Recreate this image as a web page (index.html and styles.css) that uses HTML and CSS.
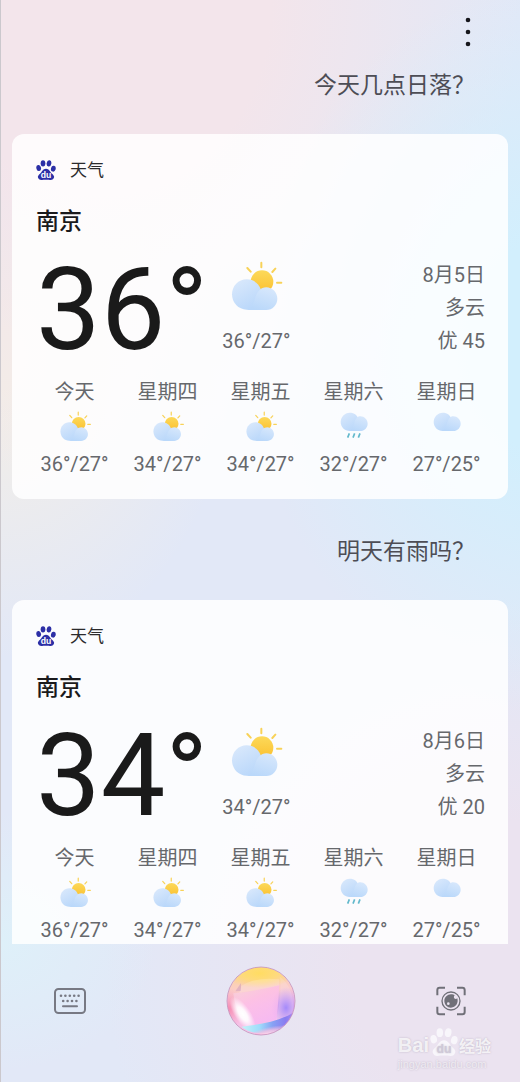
FILE: index.html
```html
<!DOCTYPE html>
<html lang="zh-CN">
<head>
<meta charset="utf-8">
<meta name="viewport" content="width=device-width, initial-scale=1">
<title>天气</title>
<link rel="stylesheet" href="styles.css">
</head>
<body>
<svg class="defs" aria-hidden="true">
  <defs>
    <linearGradient id="sun" x1="0" y1="0" x2="0" y2="1"><stop offset="0" stop-color="#fcd95a"/><stop offset="1" stop-color="#fbc02f"/></linearGradient>
    <linearGradient id="cloud" x1="0" y1="0" x2="0.6" y2="1"><stop offset="0" stop-color="#dceafc"/><stop offset="1" stop-color="#b9d7fa"/></linearGradient>
    <linearGradient id="puff" x1="0.8" y1="0" x2="0.4" y2="1"><stop offset="0" stop-color="#d8e8fc"/><stop offset="1" stop-color="#bad8fa"/></linearGradient>
    <symbol id="partly" viewBox="57 54 168 168">
      <g stroke="#f8d258" stroke-width="6" stroke-linecap="round"><path d="M157 65v14M199 83l-9 10M204 125h13M115 81l10 11"/></g>
      <circle cx="159" cy="122" r="34" fill="url(#sun)"/>
      <path d="M113 115c20 0 36 12 42 29l14 62h-56c-25 0-44-21-44-46s19-45 44-45z" fill="url(#cloud)"/>
      <path d="M113 207c10-4 18-13 25-34 5-20 17-34 34-34 18 0 33 15 33 34s-15 34-33 34z" fill="url(#puff)"/>
    </symbol>
    <symbol id="cloudy" viewBox="231 117 102 102">
      <path d="M269 125c14 0 23 8 27 20l4 35h-31c-15 0-27-12-27-27s12-28 27-28z" fill="url(#cloud)"/>
      <path d="M266 180c8-3 12-9 16-22 4-14 9-22 19-22 12 0 22 10 22 22s-10 22-22 22z" fill="url(#puff)"/>
    </symbol>
    <symbol id="rain" viewBox="231 117 102 102">
      <use href="#cloudy" x="231" y="117" width="102" height="102"/>
      <g stroke="#63b9cc" stroke-width="5"><path d="M263 200l5-13M279 200l5-13M295 200l5-13"/></g>
    </symbol>
    <symbol id="paw" viewBox="0 0 60 60">
      <ellipse cx="8" cy="24" rx="7" ry="9" transform="rotate(-12 8 24)"/>
      <ellipse cx="21" cy="10" rx="7" ry="9.500"/>
      <ellipse cx="39" cy="10" rx="7" ry="9.500" transform="rotate(10 39 10)"/>
      <ellipse cx="52" cy="26" rx="7" ry="9" transform="rotate(14 52 26)"/>
      <path d="M30 26c9 0 12 9 18 15 6 5 8 9 5 14-3 6-9 5-15 4h-16c-6 1-12 2-15-4-3-5-1-9 5-14 6-6 9-15 18-15z"/>
    </symbol>
  </defs>
</svg>
<div class="app">
  <header class="topbar">
    <button class="more" aria-label="更多"><svg viewBox="0 0 6 30"><circle cx="3" cy="3" r="2.300"/><circle cx="3" cy="15" r="2.300"/><circle cx="3" cy="27" r="2.300"/></svg></button>
  </header>
  <main class="thread">
    <p class="query">今天几点日落？</p>
    <article class="card">
      <div class="source"><svg class="logo" viewBox="0 0 60 60"><use href="#paw"/><text class="du" x="30" y="54">du</text></svg><span>天气</span></div>
      <h2 class="city">南京</h2>
      <section class="current">
        <div class="degrees">36°</div>
        <div class="range"><svg class="icon-large"><use href="#partly"/></svg><span>36°/27°</span></div>
        <div class="details"><span>8月5日</span><span>多云</span><span>优 45</span></div>
      </section>
      <ul class="forecast">
        <li><span>今天</span><svg><use href="#partly"/></svg><span>36°/27°</span></li>
        <li><span>星期四</span><svg><use href="#partly"/></svg><span>34°/27°</span></li>
        <li><span>星期五</span><svg><use href="#partly"/></svg><span>34°/27°</span></li>
        <li><span>星期六</span><svg><use href="#rain"/></svg><span>32°/27°</span></li>
        <li><span>星期日</span><svg><use href="#cloudy"/></svg><span>27°/25°</span></li>
      </ul>
    </article>
    <p class="query">明天有雨吗？</p>
    <article class="card">
      <div class="source"><svg class="logo" viewBox="0 0 60 60"><use href="#paw"/><text class="du" x="30" y="54">du</text></svg><span>天气</span></div>
      <h2 class="city">南京</h2>
      <section class="current">
        <div class="degrees">34°</div>
        <div class="range"><svg class="icon-large"><use href="#partly"/></svg><span>34°/27°</span></div>
        <div class="details"><span>8月6日</span><span>多云</span><span>优 20</span></div>
      </section>
      <ul class="forecast">
        <li><span>今天</span><svg><use href="#partly"/></svg><span>36°/27°</span></li>
        <li><span>星期四</span><svg><use href="#partly"/></svg><span>34°/27°</span></li>
        <li><span>星期五</span><svg><use href="#partly"/></svg><span>34°/27°</span></li>
        <li><span>星期六</span><svg><use href="#rain"/></svg><span>32°/27°</span></li>
        <li><span>星期日</span><svg><use href="#cloudy"/></svg><span>27°/25°</span></li>
      </ul>
    </article>
  </main>
  <footer class="dock">
    <button aria-label="键盘"><svg class="keyboard" viewBox="0 0 32 26">
      <rect x="1" y="1" width="30" height="24" rx="3.500" fill="none" stroke="#777983" stroke-width="2"/>
      <g fill="#777983"><circle cx="7" cy="7.700" r="1.300"/><circle cx="11.400" cy="7.700" r="1.300"/><circle cx="15.800" cy="7.700" r="1.300"/><circle cx="20.200" cy="7.700" r="1.300"/><circle cx="24.600" cy="7.700" r="1.300"/><circle cx="9.200" cy="13" r="1.300"/><circle cx="13.600" cy="13" r="1.300"/><circle cx="18" cy="13" r="1.300"/><circle cx="22.400" cy="13" r="1.300"/></g>
      <path d="M9 18.300h14" stroke="#777983" stroke-width="2" stroke-linecap="round"/></svg></button>
    <button aria-label="语音"><svg class="orb" viewBox="0 0 210 210">
      <defs>
        <linearGradient id="base" x1="0.4" y1="0" x2="0.5" y2="1"><stop offset="0" stop-color="#fbd98a"/><stop offset="0.300" stop-color="#fbcdc4"/><stop offset="0.550" stop-color="#fac2e6"/><stop offset="1" stop-color="#f3bfe6"/></linearGradient>
        <linearGradient id="facet" x1="0" y1="0" x2="0.6" y2="1"><stop offset="0" stop-color="#f6d6da"/><stop offset="0.450" stop-color="#fdc0e6"/><stop offset="1" stop-color="#f6b8f4"/></linearGradient>
        <linearGradient id="lower" x1="0" y1="0" x2="1" y2="0"><stop offset="0" stop-color="#c4f4f8"/><stop offset="0.350" stop-color="#9fdcfb"/><stop offset="0.600" stop-color="#86a2f4"/><stop offset="0.850" stop-color="#8a7cf0"/><stop offset="1" stop-color="#a68af0"/></linearGradient>
        <radialGradient id="violet"><stop offset="0" stop-color="#9678fa"/><stop offset="1" stop-color="#b48cf6" stop-opacity="0"/></radialGradient>
        <radialGradient id="shine"><stop offset="0" stop-color="#fff"/><stop offset="0.400" stop-color="#fff" stop-opacity="0.900"/><stop offset="1" stop-color="#fff" stop-opacity="0"/></radialGradient>
        <radialGradient id="rose"><stop offset="0" stop-color="#f58bb0"/><stop offset="1" stop-color="#f5a0c0" stop-opacity="0"/></radialGradient>
        <radialGradient id="gold"><stop offset="0" stop-color="#ffdc62"/><stop offset="0.500" stop-color="#ffdc70" stop-opacity="0.800"/><stop offset="1" stop-color="#ffd870" stop-opacity="0"/></radialGradient>
        <radialGradient id="blush"><stop offset="0" stop-color="#fbd8ee"/><stop offset="0.500" stop-color="#f9c2e2" stop-opacity="0.800"/><stop offset="1" stop-color="#f7b8e0" stop-opacity="0"/></radialGradient>
        <clipPath id="ball"><circle cx="105" cy="105" r="101"/></clipPath>
      </defs>
      <g clip-path="url(#ball)">
        <rect width="210" height="210" fill="url(#base)"/>
        <ellipse cx="100" cy="22" rx="105" ry="44" fill="url(#gold)"/>
        <ellipse cx="8" cy="130" rx="42" ry="65" fill="url(#rose)"/>
        <ellipse cx="180" cy="125" rx="45" ry="62" fill="url(#violet)"/>
        <path d="M22 82q60-6 138-24l-8 104-92 18q-32-40-38-98z" fill="url(#facet)" opacity="0.800"/>
        <path d="M28 76l17-25v24z" fill="#b684b6" opacity="0.350"/>
        <path d="M162 32c4 40-1 90-12 130 22-4 40-12 50-26 6-44-8-80-38-104z" fill="#fff" opacity="0.140"/>
        <path d="M46 60q40-28 114-20v18q-60 15-120 22z" fill="#fff" opacity="0.180"/>
        <ellipse cx="50" cy="144" rx="24" ry="60" transform="rotate(-34 50 144)" fill="url(#shine)"/>
        <path d="M46 182c52-6 108-14 156-42-10 38-46 62-94 62-26 0-46-8-62-20z" fill="url(#lower)"/>
        <ellipse cx="124" cy="206" rx="80" ry="22" transform="rotate(-14 124 206)" fill="url(#blush)"/>
      </g>
      <circle cx="105" cy="105" r="102" fill="none" stroke="#c085b4" stroke-width="3" opacity="0.700"/></svg></button>
    <button aria-label="识图"><svg class="lens" viewBox="0 0 90 90">
      <path d="M4 28V12q0-7 7-7h16M63 5h16q7 0 7 7v16M86 62v16q0 7-7 7H63M27 85H11q-7 0-7-7V62" fill="none" stroke="#707078" stroke-width="6"/>
      <circle cx="45" cy="45" r="27" fill="none" stroke="#707078" stroke-width="4"/>
      <path d="M45 25c5 0 8 1 11 3-4 4-3 10 3 11 2 0 4-1 5-2 4 14-5 28-19 28-11 0-20-9-20-20s9-20 20-20z" fill="#707078"/>
      <circle cx="37" cy="53" r="4" fill="#ebe5f1"/></svg></button>
  </footer>
  <div class="watermark">
    <div class="brand"><span>Bai</span><svg viewBox="0 0 60 60"><use href="#paw"/><text class="du" x="30" y="53">du</text></svg><span class="suffix">经验</span></div>
    <div class="site">jingyan.baidu.com</div>
  </div>
</div>
</body>
</html>
```
FILE: styles.css
```css
* { box-sizing: border-box; }

body {
  margin: 0;
  font-family: Roboto, "Noto Sans CJK SC", sans-serif;
  color: #66686c;
}

.defs { position: absolute; width: 0; height: 0; }

button {
  display: flex;
  padding: 0;
  border: 0;
  background: none;
  cursor: pointer;
}

.app {
  position: relative;
  display: flex;
  flex-direction: column;
  height: 100vh;
  border-left: 1px solid #cbc8cd;
  background:
    radial-gradient(ellipse 60% 34% at 108% 32%, #d2effd 30%, #d2effd00 100%),
    radial-gradient(ellipse 80% 45% at 20% 0%, #f3e5eb 40%, #f3e5eb00 100%),
    radial-gradient(ellipse 45% 28% at 0% 33%, #f3eee7 10%, #f3eee700 100%),
    radial-gradient(ellipse 30% 12% at 0% 87%, #def0f9 0%, #def0f900 100%),
    radial-gradient(ellipse 80% 35% at 100% 90%, #ebe3f0 40%, #ebe3f000 100%),
    #e2e8f7;
}

.topbar {
  display: flex;
  flex: none;
  justify-content: flex-end;
  align-items: center;
  height: 64px;
  padding-right: 49px;
}

.more svg { width: 6px; height: 30px; fill: #16161c; }

.thread {
  display: flex;
  flex: 1;
  flex-direction: column;
  gap: 31px;
  min-height: 0;
  padding: 0 12px 0 11px;
  overflow-y: auto;
  scrollbar-width: none;
}

.query {
  flex: none;
  margin: 0;
  padding: 4px 33px 0 0;
  font-size: 23px;
  line-height: 35px;
  text-align: right;
  color: #4d4d55;
}

.card {
  flex: none;
  padding: 24px 0 21px;
  border-radius: 12px;
  background: rgba(255, 255, 255, 0.85);
}

.source {
  display: flex;
  align-items: center;
  gap: 14px;
  padding: 0 24px;
  font-size: 17px;
  line-height: 24px;
  color: #2b2b2d;
}

.logo { width: 20px; height: 20px; fill: #2c2fa6; }

.du {
  font: bold 26px "Liberation Sans", sans-serif;
  text-anchor: middle;
  fill: #fff;
}

.city {
  margin: 25px 24px 22px;
  font-size: 23px;
  font-weight: 500;
  line-height: 30px;
  color: #1a1a1c;
}

.current {
  display: flex;
  gap: 14px;
  padding: 0 23px 0 24px;
  font-size: 20px;
  line-height: 33px;
}

.degrees {
  font-size: 115px;
  line-height: 101px;
  color: #1a1a1a;
}

.range {
  display: flex;
  flex-direction: column;
  justify-content: space-between;
  align-items: center;
  height: 99px;
}

.icon-large { width: 56px; height: 56px; }

.details {
  display: flex;
  flex: 1;
  flex-direction: column;
  align-items: flex-end;
}

.forecast {
  display: grid;
  grid-template-columns: repeat(5, 1fr);
  margin: 18px 0 0;
  padding: 0 15px 0 16px;
  list-style: none;
  font-size: 20px;
  line-height: 28px;
}

.forecast li {
  display: flex;
  flex-direction: column;
  align-items: center;
}

.forecast svg { width: 34px; height: 34px; margin: 4px 0 6px; }

.dock {
  display: flex;
  flex: none;
  justify-content: space-between;
  align-items: center;
  padding: 22px 54px 46px 53px;
}

.keyboard { width: 32px; height: 26px; }
.orb { width: 70px; height: 70px; }
.lens { width: 30px; height: 30px; }

.watermark {
  position: absolute;
  right: 29px;
  bottom: 11px;
  color: rgba(255, 255, 255, 0.8);
  text-shadow: 0 0 2px rgba(120, 110, 135, 0.4);
  pointer-events: none;
}

.brand {
  display: flex;
  align-items: flex-end;
  gap: 1px;
  font: bold 20px/24px "Liberation Sans", sans-serif;
}

.brand svg {
  width: 28px;
  height: 30px;
  fill: #f8f6fb;
  overflow: visible;
}

.brand .du { fill: #cfc9d8; }
.suffix { font: bold 16px/24px "Noto Sans CJK SC", sans-serif; }
.site { font: 11px/14px "Liberation Sans", sans-serif; color: rgba(255, 255, 255, 0.6); }
```
